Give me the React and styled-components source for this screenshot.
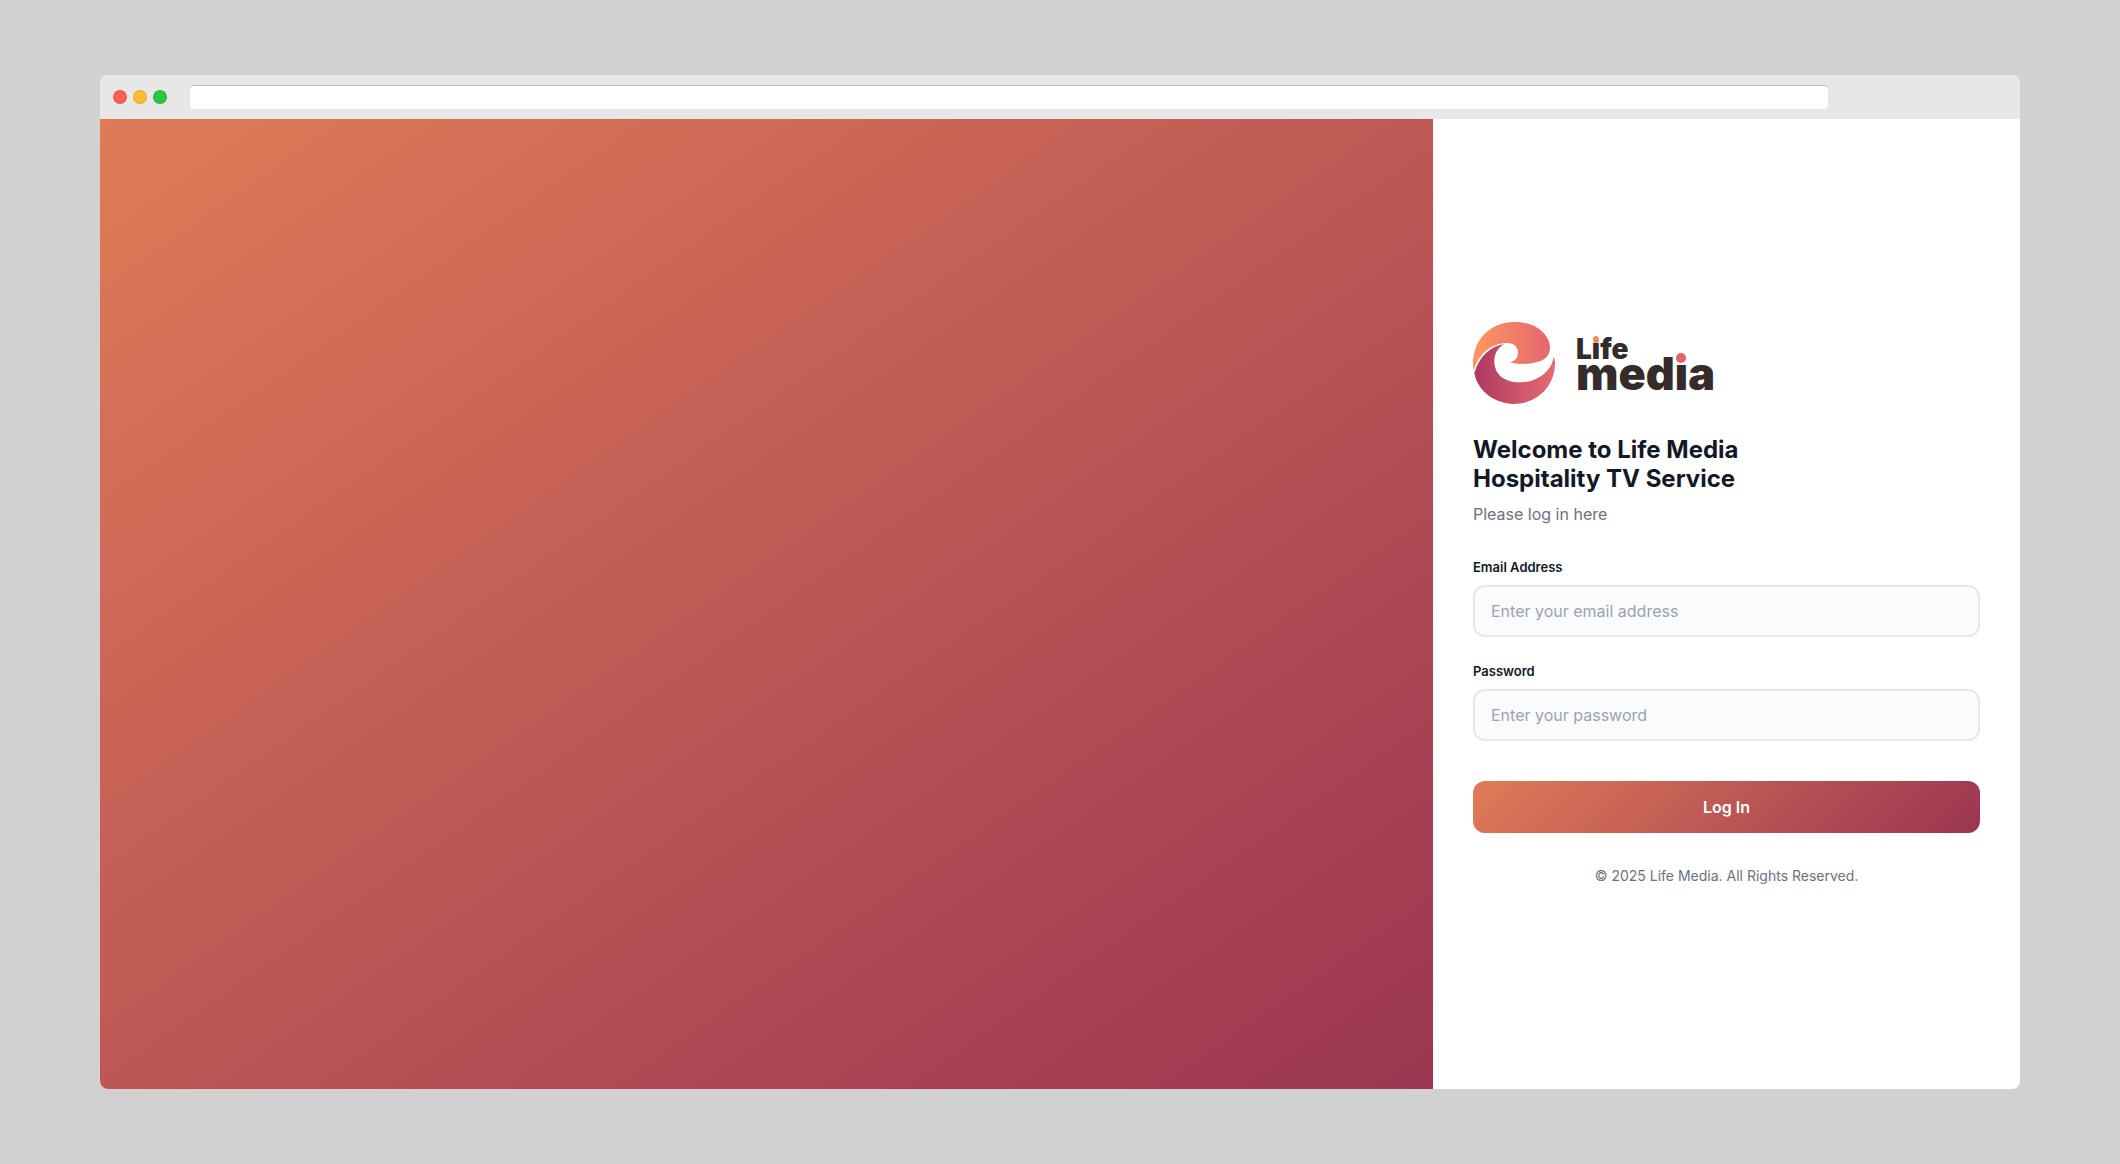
import React from 'react';
import styled, { createGlobalStyle } from 'styled-components';

const brandGradient = (angle) =>
  `linear-gradient(${angle}deg, #df7c57 0%, #ae4854 72%, #9b3652 100%)`;

const GlobalStyle = createGlobalStyle`
  *, *::before, *::after { box-sizing: border-box; }
  body {
    margin: 0;
    background: #d1d1d1;
    color: #111827;
    font-family: Inter, "Liberation Sans", sans-serif;
  }
`;

const Stage = styled.div`
  display: flex;
  min-height: 100vh;
  padding: 75px 100px;
`;

const BrowserWindow = styled.div`
  display: flex;
  flex: 1;
  flex-direction: column;
  border-radius: 8px;
  background: #fff;
`;

const TitleBar = styled.div`
  display: flex;
  align-items: center;
  height: 44px;
  padding: 0 10% 0 13px;
  border-radius: 8px 8px 0 0;
  background: #e7e7e7;
`;

const Lights = styled.div`
  display: flex;
  gap: 6px;
  margin-right: 23px;
`;

const Light = styled.span`
  width: 14px;
  height: 14px;
  border: 1px solid rgba(0, 0, 0, 0.1);
  border-radius: 50%;
  background: ${({ $color }) => $color};
`;

const AddressBar = styled.input`
  flex: 1;
  height: 24px;
  padding: 0 8px;
  border: 0;
  border-radius: 4px;
  outline: 0;
  background: #fff;
  box-shadow: inset 0 1px 0 #bfbfbf;
`;

const Page = styled.div`
  display: grid;
  flex: 1;
  grid-template-columns: 1fr 587px;
`;

const Hero = styled.section`
  border-bottom-left-radius: 8px;
  background: ${brandGradient(145)};
`;

const Panel = styled.main`
  display: flex;
  flex-direction: column;
  justify-content: center;
  padding: 40px;
`;

const Logo = styled.svg`
  display: block;
  width: 240px;
  height: 82px;
  margin-bottom: 31px;
  overflow: visible;
`;

const Wordmark = styled.text`
  fill: #342b2a;
  font-family: Inter, "Liberation Sans", sans-serif;
  font-size: ${({ $size }) => $size}px;
  font-weight: 900;
`;

const Title = styled.h1`
  max-width: 300px;
  margin: 0 0 8px;
  font-size: 24px;
  font-weight: 700;
  line-height: 29px;
`;

const Subtitle = styled.p`
  margin: 0 0 30px;
  color: #6b7280;
  font-size: 16px;
  line-height: 26px;
`;

const Form = styled.form`
  display: flex;
  flex-direction: column;
`;

const Field = styled.div`
  display: flex;
  flex-direction: column;
  gap: 8px;
  margin-bottom: 24px;
`;

const Label = styled.label`
  font-size: 13px;
  font-weight: 600;
  line-height: 20px;
`;

const TextInput = styled.input`
  width: 100%;
  height: 52px;
  padding: 0 16px;
  border: 2px solid #e5e7eb;
  border-radius: 12px;
  outline: 0;
  background: #fafbfc;
  color: #111827;
  font-family: inherit;
  font-size: 16px;

  &::placeholder { color: #9ca3af; }
`;

const SubmitButton = styled.button`
  height: 52px;
  margin-top: 16px;
  border: 0;
  border-radius: 12px;
  background: ${brandGradient(135)};
  color: #fff;
  font-family: inherit;
  font-size: 16px;
  font-weight: 600;
  cursor: pointer;
`;

const Copyright = styled.p`
  margin: 32px 0 0;
  color: #6b7280;
  font-size: 14px;
  line-height: 21px;
  text-align: center;
`;

function LifeMediaLogo() {
  return (
    <Logo viewBox="0 0 240 82" role="img" aria-label="Life media">
      <defs>
        <linearGradient id="crest" x1="0" x2="1" y1="0" y2="0">
          <stop offset="0.1" stopColor="#fa9460" />
          <stop offset="1" stopColor="#e4666f" />
        </linearGradient>
        <linearGradient id="wave" x1="0" x2="1" y1="0" y2="0">
          <stop offset="0" stopColor="#ad3a60" />
          <stop offset="1" stopColor="#e66c70" />
        </linearGradient>
        <linearGradient id="orangeDot" gradientUnits="userSpaceOnUse" x1="0" x2="0" y1="0" y2="82">
          <stop offset="0.26" stopColor="#f58a62" />
          <stop offset="0.26" stopColor="#342b2a" />
        </linearGradient>
        <linearGradient id="redDot" gradientUnits="userSpaceOnUse" x1="0" x2="0" y1="0" y2="82">
          <stop offset="0.515" stopColor="#e2646c" />
          <stop offset="0.515" stopColor="#342b2a" />
        </linearGradient>
      </defs>
      <g transform="scale(0.33333) translate(-39 -36)">
        <path
          fill="url(#crest)"
          d="M41 182C38 162 38 145 44 124C58 72 105 36 162 36C198 36 228 46 248 66C262 80 270 96 270 112C270 133 259 147 239 154C222 160 202 162 184 162C170 162 159 161 150 157C165 153 174 143 174 128C174 110 161 99 143 99C97 99 58 127 41 182Z"
        />
        <path
          fill="url(#wave)"
          d="M133 102C91 109 58 137 43 190C53 243 104 282 162 282C232 282 285 228 285 160C285 152 284 146 281 140C274 186 231 217 178 217C133 217 103 193 103 154C103 131 114 112 133 102Z"
        />
      </g>
      <Wordmark x="103" y="37" $size={28}>
        L<tspan fill="url(#orangeDot)">i</tspan>fe
      </Wordmark>
      <Wordmark x="103" y="68" $size={45}>
        med<tspan fill="url(#redDot)">i</tspan>a
      </Wordmark>
      <circle cx="123" cy="18" r="3" fill="#f58a62" />
      <circle cx="208" cy="36" r="5" fill="#e2646c" />
    </Logo>
  );
}

export default function App() {
  return (
    <>
      <GlobalStyle />
      <Stage>
        <BrowserWindow>
          <TitleBar>
            <Lights>
              <Light $color="#ff5f57" />
              <Light $color="#febc2e" />
              <Light $color="#28c840" />
            </Lights>
            <AddressBar type="text" aria-label="Address" />
          </TitleBar>
          <Page>
            <Hero />
            <Panel>
              <LifeMediaLogo />
              <Title>Welcome to Life Media Hospitality TV Service</Title>
              <Subtitle>Please log in here</Subtitle>
              <Form onSubmit={(event) => event.preventDefault()}>
                <Field>
                  <Label htmlFor="email">Email Address</Label>
                  <TextInput id="email" type="email" placeholder="Enter your email address" />
                </Field>
                <Field>
                  <Label htmlFor="password">Password</Label>
                  <TextInput id="password" type="password" placeholder="Enter your password" />
                </Field>
                <SubmitButton type="submit">Log In</SubmitButton>
              </Form>
              <Copyright>© 2025 Life Media. All Rights Reserved.</Copyright>
            </Panel>
          </Page>
        </BrowserWindow>
      </Stage>
    </>
  );
}
